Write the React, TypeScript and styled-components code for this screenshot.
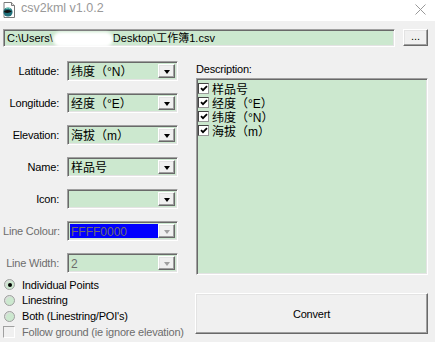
import { Fragment } from "react";
import styled, { createGlobalStyle, css } from "styled-components";

const Global = createGlobalStyle`
  html, body {
    margin: 0;
    padding: 0;
    background: #f0f0f0;
    overflow: hidden;
  }
  * { box-sizing: border-box; }
`;

const FONT = `"Liberation Sans", "Noto Sans CJK SC", sans-serif`;
const GREEN = "#cce8cf";

const sunken = css`
  border: 1px solid;
  border-color: #a0a0a0 #ffffff #ffffff #a0a0a0;
  box-shadow: inset 1px 1px 0 #696969, inset -1px -1px 0 #e3e3e3;
`;

const raised = css`
  border: 1px solid;
  border-color: #ffffff #696969 #696969 #ffffff;
  box-shadow: inset -1px -1px 0 #a0a0a0, inset 1px 1px 0 #e3e3e3;
`;

const Window = styled.div`
  width: 435px;
  height: 342px;
  font-family: ${FONT};
  font-size: 11px;
  color: #000;
  background: #f0f0f0;
  overflow: hidden;
`;

const TitleBar = styled.div`
  height: 21px;
  background: #fff;
  display: flex;
  align-items: flex-start;
  padding: 2px 9px 0 2px;
`;

const Title = styled.div`
  flex: 1;
  font-size: 12.5px;
  color: #999;
  margin-left: 5px;
  line-height: 13px;
`;

const Close = styled.div`
  width: 11px;
  height: 11px;
  margin-top: 2px;
`;

const Content = styled.div`
  padding: 8px 7px 0 3px;
`;

const PathRow = styled.div`
  display: flex;
  align-items: flex-start;
  gap: 8px;
`;

const PathField = styled.div`
  ${sunken};
  width: 392px;
  height: 18px;
  background: ${GREEN};
  padding: 0 0 0 3px;
  line-height: 16px;
  white-space: nowrap;
  overflow: hidden;
`;

const Blur = styled.span`
  display: inline-block;
  width: 60px;
  height: 15px;
  vertical-align: middle;
  background: #fff;
  border-radius: 8px;
  filter: blur(1.5px);
`;

const SmallButton = styled.div`
  ${raised};
  width: 25px;
  height: 17px;
  background: #f0f0f0;
  text-align: center;
  line-height: 12px;
`;

const Columns = styled.div`
  display: grid;
  grid-template-columns: 175px 233px;
  column-gap: 17px;
  margin-top: 14px;
`;

const LeftCol = styled.div`
  display: flex;
  flex-direction: column;
`;

const FieldGrid = styled.div`
  display: grid;
  grid-template-columns: 56px 111px;
  column-gap: 8px;
  row-gap: 12px;
  grid-auto-rows: 20px;
  align-items: center;
`;

const Label = styled.div<{ $disabled?: boolean }>`
  text-align: right;
  letter-spacing: -0.2px;
  white-space: nowrap;
  color: ${({ $disabled }) => ($disabled ? "#6d6d6d" : "#000")};
`;

const Combo = styled.div`
  ${sunken};
  height: 20px;
  display: flex;
  align-items: stretch;
  padding: 2px;
  background: ${GREEN};
`;

const ComboText = styled.div<{ $disabled?: boolean; $selected?: boolean }>`
  flex: 1;
  font-size: 12px;
  line-height: 16px;
  padding-left: 1px;
  white-space: nowrap;
  overflow: hidden;
  color: ${({ $disabled }) => ($disabled ? "#6d6d6d" : "#000")};
  background: ${({ $selected }) => ($selected ? "#0000ff" : "transparent")};
`;

const ArrowButton = styled.div<{ $disabled?: boolean }>`
  ${raised};
  width: 17px;
  background: #f0f0f0;
  display: flex;
  align-items: center;
  justify-content: center;

  &::after {
    content: "";
    margin-top: 2px;
    border-left: 3.5px solid transparent;
    border-right: 3.5px solid transparent;
    border-top: 4px solid ${({ $disabled }) => ($disabled ? "#a0a0a0" : "#000")};
  }
`;

const OptionList = styled.div`
  display: flex;
  flex-direction: column;
  margin-top: 4px;
`;

const Option = styled.div<{ $disabled?: boolean }>`
  height: 15.67px;
  display: flex;
  align-items: center;
  gap: 7px;
  padding-left: 1px;
  white-space: nowrap;
  letter-spacing: -0.2px;
  color: ${({ $disabled }) => ($disabled ? "#6d6d6d" : "#000")};
`;

const Radio = styled.span<{ $checked?: boolean }>`
  width: 11px;
  height: 11px;
  border-radius: 50%;
  background: ${GREEN};
  border: 1px solid #a0a0a0;
  box-shadow: inset 1px 1px 0 #dcdcdc;
  display: flex;
  align-items: center;
  justify-content: center;

  &::after {
    content: "";
    width: 4px;
    height: 4px;
    border-radius: 50%;
    background: ${({ $checked }) => ($checked ? "#000" : "transparent")};
  }
`;

const Box = styled.span<{ $disabled?: boolean }>`
  width: 12px;
  height: 12px;
  margin-left: -1px;
  background: ${({ $disabled }) => ($disabled ? "#f0f0f0" : "#fff")};
  border: 1px solid;
  border-color: ${({ $disabled }) =>
    $disabled ? "#a0a0a0 #fff #fff #a0a0a0" : "#444 #999 #999 #444"};
  display: flex;
  align-items: center;
  justify-content: center;
  flex-shrink: 0;
`;

const RightCol = styled.div`
  display: flex;
  flex-direction: column;
`;

const DescLabel = styled.div`
  height: 17px;
  line-height: 17px;
  padding-left: 1px;
  letter-spacing: -0.2px;
`;

const ListBox = styled.div`
  ${sunken};
  margin-left: 1px;
  width: 232px;
  height: 197px;
  background: ${GREEN};
  padding: 2px 2px 2px 1px;
`;

const ListItem = styled.div`
  height: 14.2px;
  display: flex;
  align-items: center;
  gap: 3px;
  font-size: 12px;
  white-space: nowrap;

  ${Box} {
    width: 11px;
    height: 11px;
    margin-left: 0;
  }
`;

const ConvertButton = styled.div`
  ${raised};
  margin-top: 18px;
  height: 41px;
  background: #f0f0f0;
  display: flex;
  align-items: center;
  justify-content: center;
  letter-spacing: -0.2px;
`;

const Check = () => (
  <svg width="8" height="7" viewBox="0 0 8 7">
    <path d="M1 3.2 L3 5.2 L7 1.2" stroke="#000" strokeWidth="1.8" fill="none" />
  </svg>
);

const AppIcon = () => (
  <svg width="14" height="16" viewBox="0 0 14 16">
    <path d="M2 0.5 H9.5 L12.5 3.5 V15.5 H2 Z" fill="#fff" stroke="#7a7a7a" />
    <path d="M9.5 0.5 V3.5 H12.5" fill="#e0e0e0" stroke="#7a7a7a" />
    <circle cx="6" cy="10" r="4.6" fill="#1f6f7a" />
    <path d="M2.2 9 Q6 7 9.8 9.5 Q6 12 2.2 10.2 Z" fill="#111" />
    <path d="M4 6.3 Q6.5 5.5 8.5 7" stroke="#9fd" strokeWidth="0.8" fill="none" />
  </svg>
);

const CloseIcon = () => (
  <svg width="11" height="11" viewBox="0 0 11 11">
    <path d="M0.5 0.5 L10.5 10.5 M10.5 0.5 L0.5 10.5" stroke="#999" strokeWidth="1" />
  </svg>
);

type Field = {
  label: string;
  value: string;
  disabled?: boolean;
  selected?: boolean;
};

const fields: Field[] = [
  { label: "Latitude:", value: "纬度（°N）" },
  { label: "Longitude:", value: "经度（°E）" },
  { label: "Elevation:", value: "海拔（m）" },
  { label: "Name:", value: "样品号" },
  { label: "Icon:", value: "" },
  { label: "Line Colour:", value: "FFFF0000", disabled: true, selected: true },
  { label: "Line Width:", value: "2", disabled: true },
];

const descItems = ["样品号", "经度（°E）", "纬度（°N）", "海拔（m）"];

export default function App() {
  return (
    <Window>
      <Global />
      <TitleBar>
        <AppIcon />
        <Title>csv2kml v1.0.2</Title>
        <Close>
          <CloseIcon />
        </Close>
      </TitleBar>
      <Content>
        <PathRow>
          <PathField>
            C:\Users\<Blur />Desktop\工作簿1.csv
          </PathField>
          <SmallButton>...</SmallButton>
        </PathRow>
        <Columns>
          <LeftCol>
            <FieldGrid>
              {fields.map((f) => (
                <Fragment key={f.label}>
                  <Label $disabled={f.disabled}>{f.label}</Label>
                  <Combo>
                    <ComboText $disabled={f.disabled} $selected={f.selected}>
                      {f.value}
                    </ComboText>
                    <ArrowButton $disabled={f.disabled} />
                  </Combo>
                </Fragment>
              ))}
            </FieldGrid>
            <OptionList>
              <Option>
                <Radio $checked />
                Individual Points
              </Option>
              <Option>
                <Radio />
                Linestring
              </Option>
              <Option>
                <Radio />
                Both (Linestring/POI's)
              </Option>
              <Option $disabled>
                <Box $disabled />
                Follow ground (ie ignore elevation)
              </Option>
            </OptionList>
          </LeftCol>
          <RightCol>
            <DescLabel>Description:</DescLabel>
            <ListBox>
              {descItems.map((d) => (
                <ListItem key={d}>
                  <Box>
                    <Check />
                  </Box>
                  {d}
                </ListItem>
              ))}
            </ListBox>
            <ConvertButton>Convert</ConvertButton>
          </RightCol>
        </Columns>
      </Content>
    </Window>
  );
}
